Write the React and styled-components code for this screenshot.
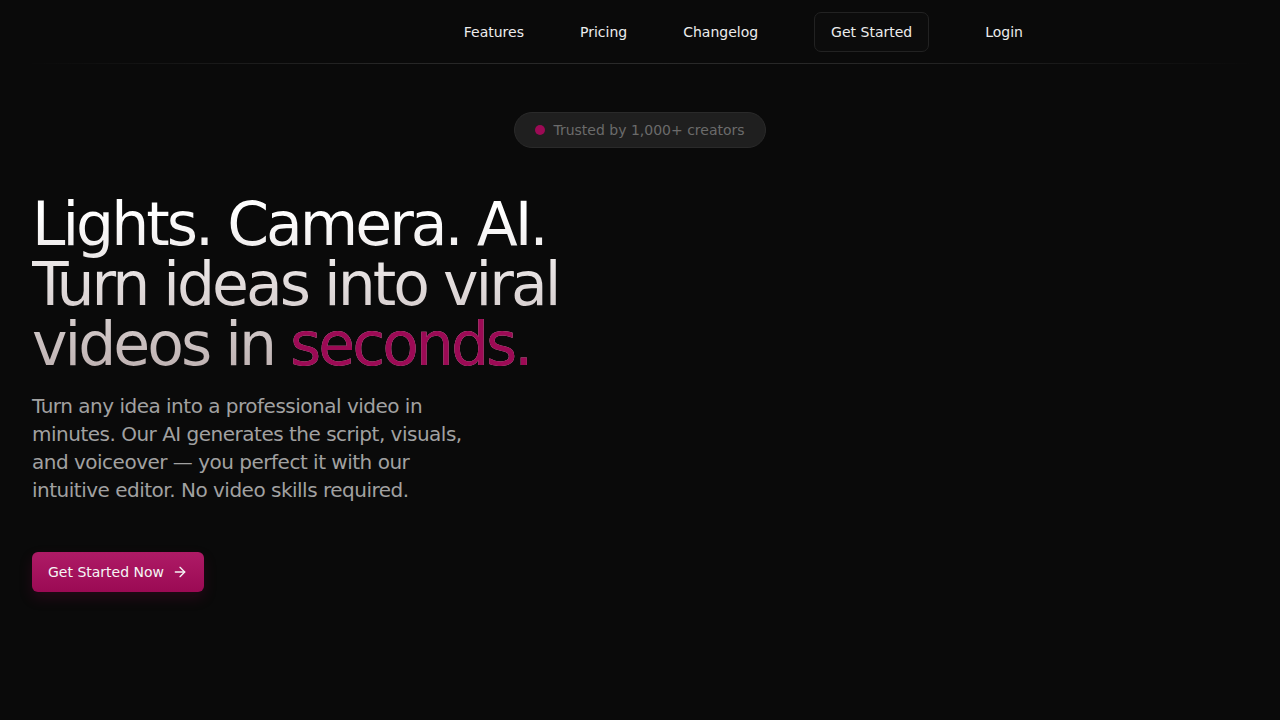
import React from 'react';
import styled, { createGlobalStyle } from 'styled-components';
import { ArrowRight } from 'lucide-react';

const GlobalStyle = createGlobalStyle`
  html, body {
    margin: 0;
    padding: 0;
    background: #0a0a0a;
    font-family: "DejaVu Sans", sans-serif;
    color: #fff;
  }
  * { box-sizing: border-box; }
`;

const Page = styled.div`
  min-height: 100vh;
  background: #0a0a0a;
`;

const NavBar = styled.header`
  height: 64px;
  position: relative;
  display: flex;
  align-items: center;
  justify-content: flex-end;
  padding-right: 257px;

  &::after {
    content: '';
    position: absolute;
    left: 0;
    right: 0;
    bottom: 0;
    height: 1px;
    background: linear-gradient(90deg, transparent 2%, #262626 30%, #2a2a2a 50%, #262626 70%, transparent 98%);
  }
`;

const NavList = styled.nav`
  display: flex;
  align-items: center;
  gap: 56px;
`;

const NavLink = styled.a`
  font-size: 14px;
  color: #ededed;
  text-decoration: none;
  cursor: pointer;
`;

const NavButton = styled.a`
  display: inline-flex;
  align-items: center;
  height: 40px;
  padding: 0 16px;
  border: 1px solid #222;
  border-radius: 7px;
  background: #0c0c0c;
  font-size: 14px;
  color: #ededed;
  cursor: pointer;
`;

const Hero = styled.main`
  padding: 48px 32px 0;
  display: flex;
  flex-direction: column;
`;

const BadgeRow = styled.div`
  display: flex;
  justify-content: center;
  margin-bottom: 46px;
`;

const Badge = styled.div`
  display: inline-flex;
  align-items: center;
  gap: 8px;
  height: 36px;
  padding: 0 20px;
  border-radius: 18px;
  background: #1f1f1f;
  border: 1px solid #2a2a2a;
  font-size: 14px;
  color: #6b6b6b;
`;

const Dot = styled.span`
  width: 10px;
  height: 10px;
  border-radius: 50%;
  background: #9c0a55;
`;

const Heading = styled.h1`
  margin: 0;
  font-size: 60px;
  font-weight: 400;
  line-height: 60px;
  letter-spacing: -3px;
  background: linear-gradient(180deg, #ffffff 10%, #bdb0b0 100%);
  -webkit-background-clip: text;
  background-clip: text;
  color: transparent;
`;

const Accent = styled.span`
  color: #9c0a55;
  -webkit-text-fill-color: #9c0a55;
`;

const Lead = styled.p`
  margin: 18px 0 0;
  max-width: 448px;
  font-size: 20px;
  line-height: 28px;
  letter-spacing: -0.5px;
  color: #a1a1a1;
`;

const CtaRow = styled.div`
  margin-top: 48px;
`;

const CtaButton = styled.a`
  display: inline-flex;
  align-items: center;
  gap: 8px;
  height: 40px;
  padding: 0 16px;
  border-radius: 6px;
  background: linear-gradient(180deg, #ae1b66 0%, #9b0a54 100%);
  box-shadow: 0 6px 14px rgba(156, 10, 85, 0.18);
  font-size: 14px;
  color: #f5f5f5;
  cursor: pointer;
`;

export default function App() {
  return (
    <Page>
      <GlobalStyle />
      <NavBar>
        <NavList>
          <NavLink>Features</NavLink>
          <NavLink>Pricing</NavLink>
          <NavLink>Changelog</NavLink>
          <NavButton>Get Started</NavButton>
          <NavLink>Login</NavLink>
        </NavList>
      </NavBar>
      <Hero>
        <BadgeRow>
          <Badge>
            <Dot />
            Trusted by 1,000+ creators
          </Badge>
        </BadgeRow>
        <Heading>
          Lights. Camera. AI.
          <br />
          Turn ideas into viral
          <br />
          videos in <Accent>seconds.</Accent>
        </Heading>
        <Lead>
          Turn any idea into a professional video in minutes. Our AI generates the script,
          visuals, and voiceover — you perfect it with our intuitive editor. No video skills required.
        </Lead>
        <CtaRow>
          <CtaButton>
            Get Started Now
            <ArrowRight size={16} strokeWidth={2} />
          </CtaButton>
        </CtaRow>
      </Hero>
    </Page>
  );
}
